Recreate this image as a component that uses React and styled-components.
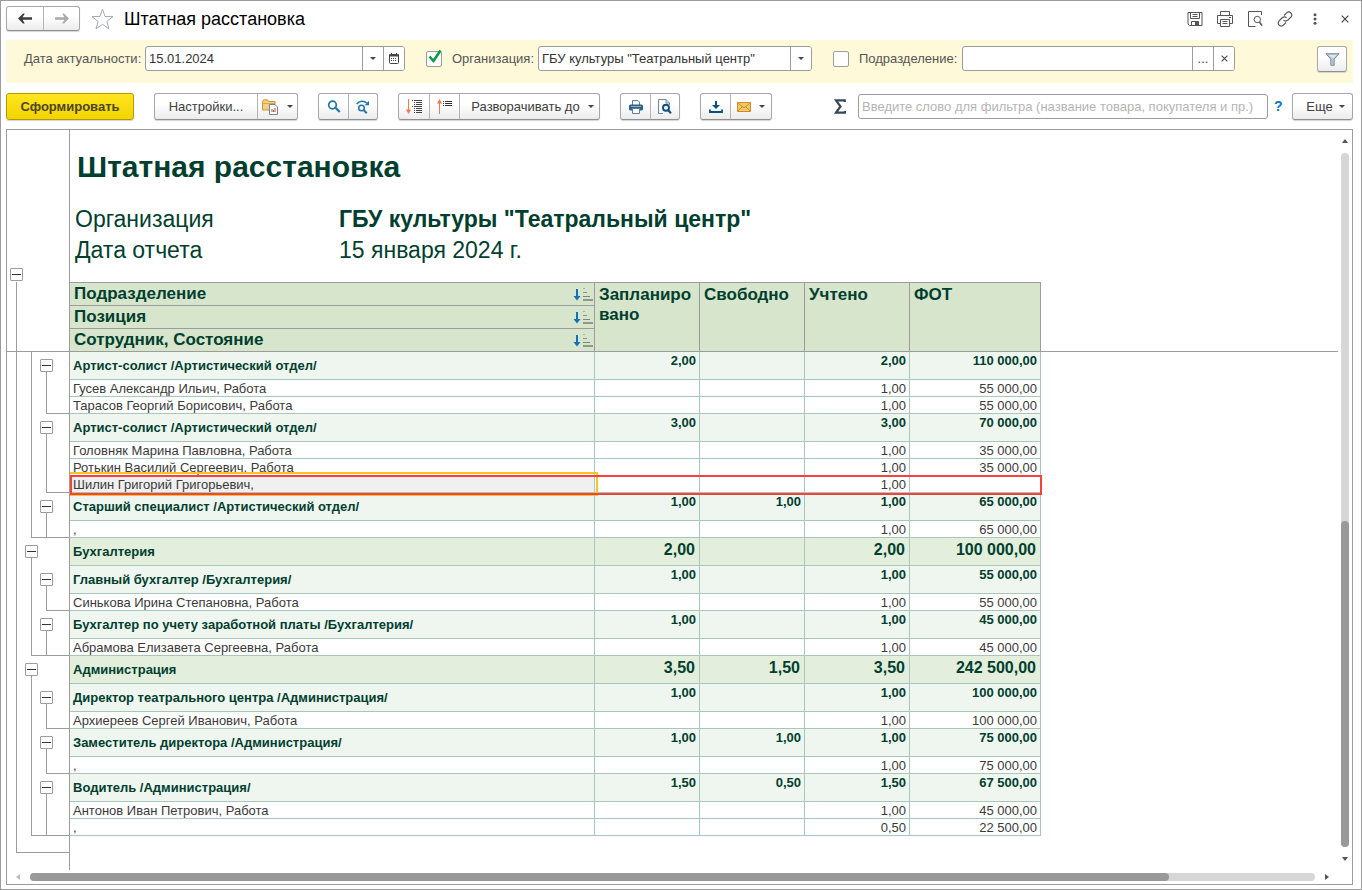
import React from "react";
import styled, { createGlobalStyle, css } from "styled-components";

const LINE = "#9c9c9c";
const GRID = "#a9c6bb";
const DARK = "#003f2f";
const NUM = 105;
const SUM = 131;
const NAME = 525;

const GlobalStyle = createGlobalStyle`
  *, *::before, *::after { box-sizing: border-box; }
  body {
    margin: 0;
    background: #fff;
    color: #404040;
    font: 13px/17px "Liberation Sans", Arial, sans-serif;
  }
  button, input, select { font: inherit; color: inherit; }
`;

const Window = styled.div`
  display: flex;
  flex-direction: column;
  min-height: 100vh;
  padding: 0 8px 4px 5px;
  border: 1px solid ${LINE};
`;

/* ---------- title bar ---------- */

const TitleBar = styled.header`
  display: flex;
  align-items: center;
  height: 39px;
  padding-bottom: 4px;
`;

const ButtonGroup = styled.div`
  display: flex;
  flex: none;
  border: 1px solid #a8a8a8;
  border-bottom-color: #8f8f8f;
  border-radius: 3px;
  background: linear-gradient(#fff 40%, #ececec);
  box-shadow: 0 1px 1px #d4d4d4;
`;

const ToolButton = styled.button`
  display: flex;
  align-items: center;
  justify-content: center;
  gap: ${(p) => p.$gap || 8}px;
  width: ${(p) => p.$width}px;
  height: ${(p) => p.$height || 25}px;
  padding: 0 0 0 ${(p) => (p.$menu ? 6 : 0)}px;
  border: 0;
  background: none;
  & + & { border-left: 1px solid #b5b5b5; }
`;

const StarButton = styled.button`
  display: flex;
  margin: 0 10px 0 11px;
  padding: 0;
  border: 0;
  background: none;
`;

const WindowTitle = styled.h1`
  margin: 0;
  color: #000;
  font-size: 18px;
  font-weight: 400;
  line-height: 24px;
`;

const WindowActions = styled.div`
  display: flex;
  gap: 14px;
  margin-left: auto;
`;

const ActionButton = styled.button`
  display: flex;
  align-items: center;
  justify-content: center;
  width: 16px;
  height: 18px;
  padding: 0;
  border: 0;
  background: none;
`;

/* ---------- filter band ---------- */

const FilterBand = styled.section`
  display: flex;
  align-items: flex-start;
  height: 43px;
  padding: 6px 6px 0 18px;
  background: #fef9d9;
`;

const FilterItem = styled.div`
  display: flex;
  align-items: center;
  flex: 0 1 ${(p) => p.$width}px;
  min-width: 0;
  margin-right: 21px;
`;

const FilterLabel = styled.label`
  flex: none;
  width: ${(p) => p.$width}px;
  color: #555;
  white-space: nowrap;
`;

const FieldBox = styled.div`
  display: flex;
  flex: 1;
  min-width: 0;
  height: 25px;
  border: 1px solid ${LINE};
  border-radius: 3px;
  background: #fff;
  overflow: hidden;
`;

const fieldText = css`
  flex: 1;
  min-width: 0;
  height: 23px;
  padding: 0 3px;
  border: 0;
  outline: 0;
  background: none;
  color: #333;
`;

const FieldInput = styled.input`
  ${fieldText}
  &::placeholder { color: #b5b5b5; opacity: 1; }
`;

const FieldSelect = styled.select`
  ${fieldText}
  appearance: none;
`;

const FieldButton = styled.button`
  display: flex;
  align-items: center;
  justify-content: center;
  flex: none;
  width: 21px;
  height: 23px;
  padding: 0;
  border: 0;
  border-left: 1px solid ${LINE};
  background: #fff;
`;

const TickWrap = styled.span`
  position: relative;
  flex: none;
  width: 16px;
  height: 16px;
  margin-right: 10px;
`;

const TickInput = styled.input`
  display: block;
  appearance: none;
  width: 16px;
  height: 16px;
  margin: 0;
  border: 1px solid ${LINE};
  border-radius: 2px;
  background: #fff;
`;

const TickMark = styled.svg`
  position: absolute;
  left: 2px;
  top: -2px;
  pointer-events: none;
`;

const PushRight = styled.div`
  display: flex;
  align-items: center;
  margin-left: auto;
  min-width: 0;
`;

/* ---------- command bar ---------- */

const CommandBar = styled.div`
  display: flex;
  gap: 20px;
  height: 46px;
  padding-top: 10px;
  align-items: flex-start;
`;

const PrimaryButton = styled.button`
  flex: none;
  width: 128px;
  height: 27px;
  padding: 0;
  border: 1px solid #b39b00;
  border-radius: 3px;
  background: linear-gradient(#ffe51f, #f2d400);
  box-shadow: 0 1px 1px #d4d4d4;
  color: #4a4526;
  font-weight: 700;
`;

const SearchBox = styled(FieldBox)`
  flex: 0 1 auto;
  width: 410px;
  margin: 0 6px 0 12px;
`;

const HelpButton = styled.button`
  flex: none;
  width: 8px;
  margin-right: 10px;
  padding: 0;
  border: 0;
  background: none;
  color: #0076c0;
  font-size: 14px;
  font-weight: 700;
`;

/* ---------- report ---------- */

const ReportFrame = styled.main`
  display: flex;
  flex-direction: column;
  flex: 1;
  border: 1px solid ${LINE};
`;

const ReportBody = styled.div`
  display: flex;
  flex: 1;
`;

const Sheet = styled.div`
  display: flex;
  flex-direction: column;
  flex: 1;
  min-width: 0;
`;

const SheetHead = styled.div`
  display: flex;
  height: 152px;
`;

const Gutter = styled.div`
  display: flex;
  align-items: flex-end;
  flex: none;
  width: 63px;
  padding-left: 3px;
  border-right: 1px solid ${LINE};
`;

const GutterFill = styled(Gutter)`
  flex: 1;
`;

const HeadText = styled.div`
  flex: 1;
  padding: 19px 0 0 5px;
  color: ${DARK};
`;

const ReportTitle = styled.h2`
  margin: 0 0 19px;
  padding-left: 2px;
  font-size: 30px;
  line-height: 36px;
`;

const Facts = styled.dl`
  display: grid;
  grid-template-columns: 264px 1fr;
  margin: 0;
  font-size: 23px;
  line-height: 31px;
`;

const Fact = styled.dd`
  margin: 0;
  font-weight: ${(p) => (p.$strong ? 700 : 400)};
`;

const Table = styled.table`
  width: 100%;
  table-layout: fixed;
  border-collapse: separate;
  border-spacing: 0;
`;

const ink = `linear-gradient(${LINE}, ${LINE})`;
const laneStart = [9, 7, 7];
const lanePaint = {
  none: () => "none",
  start: (x) => `${ink} ${x}px 100% / 1px 50% no-repeat`,
  through: (x) => `${ink} ${x}px 0 / 1px 100% no-repeat`,
  end: (x) =>
    `${ink} ${x}px 0 / 1px 100% no-repeat, ${ink} 100% 100% / calc(100% - ${x}px) 1px no-repeat`,
  bar: () => `${ink} 0 100% / 100% 1px no-repeat`,
  cross: (x) => `${ink} ${x}px 0 / 1px 100% no-repeat, ${ink} 0 100% / 100% 1px no-repeat`,
};

const Lane = styled.td`
  padding: 0 0 0 ${(p) => (p.$index === 0 ? 3 : 1)}px;
  border-right: ${(p) => (p.$index === 2 ? `1px solid ${LINE}` : 0)};
  background: ${(p) => lanePaint[p.$paint](laneStart[p.$index])};
  vertical-align: middle;
`;

const Toggle = styled.button`
  display: flex;
  align-items: center;
  justify-content: center;
  width: 13px;
  height: 13px;
  margin-bottom: 1px;
  padding: 0;
  border: 1px solid ${LINE};
  border-radius: 1px;
  background: #fff;
  &::before {
    content: "";
    width: 9px;
    height: 1px;
    background: #333;
  }
`;

const HeadRow = styled.tr`
  height: ${(p) => (p.$first ? 24 : 23)}px;
`;

const HeadCell = styled.th`
  padding: ${(p) => (p.$tall ? "2px 3px 0 4px" : "0 1px 0 4px")};
  border-right: 1px solid ${LINE};
  border-bottom: 1px solid ${LINE};
  border-top: ${(p) => (p.$top ? `1px solid ${LINE}` : 0)};
  background: #d6e5cb;
  color: ${DARK};
  font-size: 17px;
  line-height: 20px;
  text-align: left;
  vertical-align: ${(p) => (p.$tall ? "top" : "middle")};
  word-break: ${(p) => (p.$tall ? "break-all" : "normal")};
`;

const HeadLabel = styled.div`
  display: flex;
  align-items: center;
  justify-content: space-between;
`;

const Filler = styled.td`
  padding: 0;
  border-bottom: ${(p) => (p.$line ? `1px solid ${LINE}` : 0)};
`;

const rowLook = {
  person: css`
    --fill: #fff;
    --drop: 2px;
    height: 17px;
    color: #3a3a3a;
    font-size: 13px;
    line-height: 14px;
  `,
  post: css`
    --fill: #eff5ef;
    --drop: 0;
    height: 28px;
    color: ${DARK};
    font-size: 13px;
    font-weight: 700;
    line-height: 17px;
  `,
  dept: css`
    --fill: #e3efdc;
    --drop: 0;
    height: 28px;
    color: ${DARK};
    font-size: 13px;
    font-weight: 700;
    line-height: 23px;
  `,
};

const DataRow = styled.tr`
  ${(p) => rowLook[p.$kind]}
`;

const NameCell = styled.td`
  position: ${(p) => (p.$selected ? "relative" : "static")};
  padding: var(--drop) 3px 0;
  border-right: 1px solid ${GRID};
  border-bottom: 1px solid ${GRID};
  background: ${(p) => (p.$selected ? "#f0f0f0" : "var(--fill)")};
  white-space: nowrap;
`;

const NumberCell = styled.td`
  padding: var(--drop) ${(p) => (p.$large ? 4 : 3)}px 0 0;
  border-right: 1px solid ${GRID};
  border-bottom: 1px solid ${GRID};
  background: var(--fill);
  font-size: ${(p) => (p.$large ? 16 : 13)}px;
  text-align: right;
  vertical-align: top;
  white-space: nowrap;
`;

const CellCursor = styled.span`
  position: absolute;
  inset: -4px -4px -4px 0;
  border: 2px solid #f7c325;
  border-left: 0;
  pointer-events: none;
`;

const RowMarker = styled.span`
  position: absolute;
  left: 0;
  top: -1px;
  bottom: -3px;
  width: ${NAME + NUM * 3 + SUM + 1}px;
  border: 2px solid #f9403c;
  pointer-events: none;
  z-index: 1;
`;

const TailRow = styled.tr`
  height: 17px;
`;

/* ---------- scroll bars ---------- */

const VScroll = styled.div`
  display: flex;
  flex-direction: column;
  align-items: center;
  flex: none;
  width: 14px;
  padding: 9px 0;
  gap: 10px;
`;

const HScroll = styled.div`
  display: flex;
  align-items: center;
  height: 14px;
  padding: 0 23px 0 9px;
  gap: 10px;
`;

const Track = styled.div`
  display: flex;
  flex: 1;
  flex-direction: ${(p) => (p.$vertical ? "column" : "row")};
  justify-content: ${(p) => (p.$vertical ? "flex-end" : "flex-start")};
  width: ${(p) => (p.$vertical ? "8px" : "auto")};
  height: ${(p) => (p.$vertical ? "auto" : "8px")};
  border-radius: 4px;
  background: #d6d6d6;
`;

const Thumb = styled.div`
  flex: 0 0 ${(p) => p.$share}%;
  border-radius: 4px;
  background: #999;
`;

const ArrowSvg = styled.svg`
  flex: none;
`;

/* ---------- icons ---------- */

const Caret = () => (
  <ArrowSvg width="6" height="3" viewBox="0 0 6 3" aria-hidden="true">
    <path d="M0 0h6L3 3z" fill="#444" />
  </ArrowSvg>
);

const ScrollArrow = ({ d, w, h, fill = "#555" }) => (
  <ArrowSvg width={w} height={h} viewBox={`0 0 ${w} ${h}`} aria-hidden="true">
    <path d={d} fill={fill} />
  </ArrowSvg>
);

const ArrowIcon = ({ color, flip }) => (
  <svg width="14" height="11" viewBox="0 0 14 11" aria-hidden="true">
    <g transform={flip ? "matrix(-1 0 0 1 14 0)" : undefined}>
      <path d="M0 5.5 5 .5h1.800L4.600 4.300H14v2.400H4.600L6.800 10.500H5z" fill={color} />
    </g>
  </svg>
);

const StarIcon = () => (
  <svg width="23" height="22" viewBox="0 0 23 22" aria-hidden="true">
    <path
      d="M11.5 1.2 14.1 8.5 22 8.6 15.8 13.4 18 20.8 11.5 16.4 5 20.8 7.2 13.4 1 8.6 8.9 8.5z"
      fill="#fff"
      stroke="#a5a9ae"
    />
  </svg>
);

const SaveIcon = () => (
  <svg width="16" height="16" viewBox="0 0 16 16" fill="none" stroke="#555" aria-hidden="true">
    <path d="M1 1.5h14v13H2.5L1 13z" />
    <path d="M3.5 1.5v6h9v-6M5.5 3.5h5M5.5 5.5h5M4.5 14.5v-4h7v4" />
    <path d="M8 11h3v3.5H8z" fill="#555" stroke="none" />
  </svg>
);

const PrinterIcon = () => (
  <svg width="16" height="16" viewBox="0 0 16 16" fill="none" stroke="#555" aria-hidden="true">
    <path d="M3.5 4.5v-4h9v4M3.5 12.5h-3v-8h15v8h-3M3.5 8.5h9v7h-9zM5.5 10.5h5M5.5 12.5h5M12 6.5h2" />
  </svg>
);

const PreviewIcon = () => (
  <svg width="16" height="16" viewBox="0 0 16 16" fill="none" stroke="#555" aria-hidden="true">
    <path d="M14.500 4V.5h-13v15h7" />
    <circle cx="10.300" cy="8.500" r="3.200" />
    <path d="m12.500 11 2.500 3.600" strokeWidth="1.6" />
  </svg>
);

const LinkIcon = () => (
  <svg width="16" height="16" viewBox="0 0 16 16" fill="none" stroke="#555" strokeWidth="1.2" aria-hidden="true">
    <path d="M7 4.5 9.6 1.9a2.9 2.9 0 0 1 4.3 0 2.9 2.9 0 0 1 0 4.2L10.700 9.200a2.900 2.900 0 0 1-4.200 0" />
    <path d="M9 11.500 6.400 14.100a2.900 2.900 0 0 1-4.300 0 2.900 2.900 0 0 1 0-4.200L5.300 6.800a2.900 2.900 0 0 1 4.200 0" />
  </svg>
);

const DotsIcon = () => (
  <svg width="4" height="12" viewBox="0 0 4 12" fill="#555" aria-hidden="true">
    <circle cx="2" cy="1.700" r="1.500" />
    <circle cx="2" cy="6" r="1.500" />
    <circle cx="2" cy="10.300" r="1.500" />
  </svg>
);

const CrossIcon = ({ size = 8 }) => (
  <svg width={size} height={size} viewBox="0 0 8 8" stroke="#444" strokeWidth="1.200" aria-hidden="true">
    <path d="m.7.7 6.600 6.600M7.300.7.700 7.300" />
  </svg>
);

const CalendarIcon = () => (
  <svg width="10" height="11" viewBox="0 0 10 11" fill="none" stroke="#444" aria-hidden="true">
    <rect x=".5" y="1.500" width="9" height="9" rx="1" />
    <path d="M0 2.500h10" strokeWidth="2" />
    <path d="M2.500 0v2M7.500 0v2" />
    <path d="M2 5.500h6M2 7.500h6" strokeDasharray="1 1" />
  </svg>
);

const FunnelIcon = () => (
  <svg width="15" height="13" viewBox="0 0 15 13" aria-hidden="true">
    <path d="M1 .7h13L9.200 6.200v6.100H5.800V6.200z" fill="#b9c6d2" stroke="#7c8f9f" />
    <path d="M3.500 2h8L8 5.500z" fill="#dfe7ee" />
  </svg>
);

const FolderIcon = () => (
  <svg width="17" height="16" viewBox="0 0 17 16" aria-hidden="true">
    <path d="M.5 2.500 1.500.8h4l1 1.700h6.500V11H.5z" fill="#f4cf7c" stroke="#c9953a" />
    <path d="M.5 4.500H13" stroke="#d8a74c" />
    <path d="M7.500 5.500h5.500l2.500 2.500v7.500h-8z" fill="#fff" stroke="#6f8597" />
    <path d="M10 13v-3" stroke="#e03a2f" />
    <path d="M11.500 13v-2" stroke="#2f9e4f" />
    <path d="M13 13V9" stroke="#e03a2f" />
  </svg>
);

const FindIcon = () => (
  <svg width="14" height="13" viewBox="0 0 14 13" fill="none" stroke="#2474ac" aria-hidden="true">
    <circle cx="5.500" cy="5" r="3.800" strokeWidth="1.700" />
    <path d="m8.500 7.800 4.200 4.200" strokeWidth="2.200" />
  </svg>
);

const FindNextIcon = () => (
  <svg width="14" height="14" viewBox="0 0 14 14" fill="none" stroke="#2474ac" aria-hidden="true">
    <path d="M.8 4C3 .8 8 .3 10.800 3" strokeWidth="1.600" />
    <path d="M13 .8v4.400H8.600z" fill="#2474ac" stroke="none" />
    <circle cx="5.500" cy="8" r="2.800" strokeWidth="1.500" />
    <path d="m7.600 10 3.200 3.200" strokeWidth="2" />
  </svg>
);

const ExpandIcon = () => (
  <svg width="16" height="15" viewBox="0 0 16 15" fill="none" aria-hidden="true">
    <path d="M2.500 0v13" stroke="#f4794a" />
    <path d="M0 10.500h5L2.500 15z" fill="#f4794a" />
    <path d="M6 1.500h1M8 1.500h8M8 3.500h1M10 3.500h6M8 5.500h1M10 5.500h6M6 7.500h1M8 7.500h8M8 9.500h1M10 9.500h6M8 11.500h1M10 11.500h6M8 13.500h1M10 13.500h6" stroke="#444" />
  </svg>
);

const CollapseIcon = () => (
  <svg width="16" height="15" viewBox="0 0 16 15" fill="none" aria-hidden="true">
    <path d="M2.500 2v13" stroke="#f4794a" />
    <path d="M0 4.500h5L2.500 0z" fill="#f4794a" />
    <path d="M6 2.500h1M8 2.500h7M6 4.500h1M8 4.500h7M6 6.500h1M8 6.500h7" stroke="#333" />
  </svg>
);

const PrintIcon = () => (
  <svg width="14" height="14" viewBox="0 0 14 14" aria-hidden="true">
    <path d="M3.500 5V.5H9l1.500 1.500V5" fill="#fff" stroke="#5f7f9c" />
    <rect y="4.500" width="14" height="6" rx="1.500" fill="#2f6087" />
    <path d="M2 6.500h10" stroke="#8fb1cb" />
    <path d="M3.500 8.500h7v5h-7z" fill="#fff" stroke="#5f7f9c" />
  </svg>
);

const PagePreviewIcon = () => (
  <svg width="14" height="15" viewBox="0 0 14 15" fill="none" aria-hidden="true">
    <path d="M5 14.500H.5V.5H8l3.500 3.500V6M8 .5V4h3.500" stroke="#71899d" />
    <circle cx="8" cy="8.800" r="3" stroke="#0f4f80" strokeWidth="1.900" />
    <path d="m10 11 3 3.200" stroke="#0f4f80" strokeWidth="2.200" />
  </svg>
);

const DownloadIcon = () => (
  <svg width="14" height="12" viewBox="0 0 14 12" fill="none" stroke="#0b4f82" aria-hidden="true">
    <path d="M7 0v5" strokeWidth="2" />
    <path d="M3 4h8L7 8z" fill="#0b4f82" stroke="none" />
    <path d="M1 8.500V11h12V8.500" strokeWidth="1.800" />
  </svg>
);

const MailIcon = () => (
  <svg width="14" height="10" viewBox="0 0 14 10" aria-hidden="true">
    <path d="M.5.5h13v9H.5z" fill="#f8c766" stroke="#cb8d2b" />
    <path d="m1 1 6 5 6-5M1 9l4-4M13 9 9 5" fill="none" stroke="#c98a2a" />
  </svg>
);

const SigmaIcon = () => (
  <ArrowSvg width="12" height="15" viewBox="0 0 12 15" aria-hidden="true">
    <path d="M10.800 3V1.400H2L6.500 7.500 2 13.600h9V12" fill="none" stroke="#35495a" strokeWidth="2.200" />
  </ArrowSvg>
);

const SortIcon = () => (
  <svg width="20" height="13" viewBox="0 0 20 13" fill="none" aria-hidden="true">
    <path d="M4 1v8" stroke="#1271bd" strokeWidth="2" />
    <path d="M.5 8h7L4 12.500z" fill="#1271bd" />
    <path d="M10 .5h2" stroke="#a9b3a4" />
    <path d="M10 4.500h4" stroke="#8d9689" />
    <path d="M10 8.500h7" stroke="#7d867a" />
    <path d="M10 12h10" stroke="#4a4f48" />
  </svg>
);

/* ---------- data ---------- */

const post = (name, values, people) => ({ name, values, people });

const report = [
  {
    posts: [
      post("Артист-солист /Артистический отдел/", ["2,00", "", "2,00", "110 000,00"], [
        ["Гусев Александр Ильич, Работа", "1,00", "55 000,00"],
        ["Тарасов Георгий Борисович, Работа", "1,00", "55 000,00"],
      ]),
      post("Артист-солист /Артистический отдел/", ["3,00", "", "3,00", "70 000,00"], [
        ["Головняк Марина Павловна, Работа", "1,00", "35 000,00"],
        ["Ротькин Василий Сергеевич, Работа", "1,00", "35 000,00"],
        ["Шилин Григорий Григорьевич,", "1,00", "", true],
      ]),
      post("Старший специалист /Артистический отдел/", ["1,00", "1,00", "1,00", "65 000,00"], [
        [",", "1,00", "65 000,00"],
      ]),
    ],
  },
  {
    name: "Бухгалтерия",
    values: ["2,00", "", "2,00", "100 000,00"],
    posts: [
      post("Главный бухгалтер /Бухгалтерия/", ["1,00", "", "1,00", "55 000,00"], [
        ["Синькова Ирина Степановна, Работа", "1,00", "55 000,00"],
      ]),
      post("Бухгалтер по учету заработной платы /Бухгалтерия/", ["1,00", "", "1,00", "45 000,00"], [
        ["Абрамова Елизавета Сергеевна, Работа", "1,00", "45 000,00"],
      ]),
    ],
  },
  {
    name: "Администрация",
    values: ["3,50", "1,50", "3,50", "242 500,00"],
    posts: [
      post("Директор театрального центра /Администрация/", ["1,00", "", "1,00", "100 000,00"], [
        ["Архиереев Сергей Иванович, Работа", "1,00", "100 000,00"],
      ]),
      post("Заместитель директора /Администрация/", ["1,00", "1,00", "1,00", "75 000,00"], [
        [",", "1,00", "75 000,00"],
      ]),
      post("Водитель /Администрация/", ["1,50", "0,50", "1,50", "67 500,00"], [
        ["Антонов Иван Петрович, Работа", "1,00", "45 000,00"],
        [",", "0,50", "22 500,00"],
      ]),
    ],
  },
];

const personLanes = (lastPerson, lastPost) => {
  if (lastPost) return ["through", "end", "cross"];
  return ["through", "through", lastPerson ? "end" : "through"];
};

const rows = report.flatMap((dept) => [
  ...(dept.name
    ? [{ kind: "dept", name: dept.name, values: dept.values, lanes: ["through", "start", "none"] }]
    : []),
  ...dept.posts.flatMap((item, p) => [
    { kind: "post", name: item.name, values: item.values, lanes: ["through", "through", "start"] },
    ...item.people.map(([name, count, sum, selected], i) => {
      const lastPerson = i === item.people.length - 1;
      return {
        kind: "person",
        name,
        selected,
        values: ["", "", count, sum],
        lanes: personLanes(lastPerson, lastPerson && p === dept.posts.length - 1),
      };
    }),
  ]),
]);

const Lanes = ({ paints }) =>
  paints.map((paint, i) => (
    <Lane key={i} $index={i} $paint={paint}>
      {paint === "start" && <Toggle type="button" aria-label="Свернуть группу" />}
    </Lane>
  ));

const keyHeads = ["Подразделение", "Позиция", "Сотрудник, Состояние"];
const numberHeads = ["Запланировано", "Свободно", "Учтено", "ФОТ"];

const ReportTable = () => (
  <Table>
    <colgroup>
      {[17, 15, 31, NAME, NUM, NUM, NUM, SUM].map((w, i) => (
        <col key={i} width={w} />
      ))}
      <col />
    </colgroup>
    <thead>
      {keyHeads.map((head, i) => (
        <HeadRow key={head} $first={i === 0}>
          <Lanes paints={i === 2 ? ["cross", "bar", "bar"] : ["through", "none", "none"]} />
          <HeadCell $top={i === 0}>
            <HeadLabel>
              {head}
              <SortIcon />
            </HeadLabel>
          </HeadCell>
          {i === 0 &&
            numberHeads.map((text) => (
              <HeadCell key={text} $tall $top rowSpan={3}>
                {text}
              </HeadCell>
            ))}
          <Filler $line={i === 2} />
        </HeadRow>
      ))}
    </thead>
    <tbody>
      {rows.map((row, i) => (
        <DataRow key={i} $kind={row.kind}>
          <Lanes paints={row.lanes} />
          <NameCell $selected={row.selected}>
            {row.name}
            {row.selected && <CellCursor />}
            {row.selected && <RowMarker />}
          </NameCell>
          {row.values.map((value, c) => (
            <NumberCell key={c} $large={row.kind === "dept"}>
              {value}
            </NumberCell>
          ))}
          <Filler />
        </DataRow>
      ))}
      <TailRow>
        <Lanes paints={["end", "bar", "bar"]} />
        <Filler colSpan={6} />
      </TailRow>
    </tbody>
  </Table>
);

const windowActions = [
  ["Сохранить", SaveIcon],
  ["Печать", PrinterIcon],
  ["Предварительный просмотр", PreviewIcon],
  ["Ссылка", LinkIcon],
  ["Меню", DotsIcon],
  ["Закрыть", CrossIcon],
];

export default function App() {
  return (
    <Window>
      <GlobalStyle />
      <TitleBar>
        <ButtonGroup>
          <ToolButton type="button" $width={36} $height={23} aria-label="Назад">
            <ArrowIcon color="#3d3d3d" />
          </ToolButton>
          <ToolButton type="button" $width={36} $height={23} aria-label="Вперед">
            <ArrowIcon color="#a9a9a9" flip />
          </ToolButton>
        </ButtonGroup>
        <StarButton type="button" aria-label="В избранное">
          <StarIcon />
        </StarButton>
        <WindowTitle>Штатная расстановка</WindowTitle>
        <WindowActions>
          {windowActions.map(([label, Icon]) => (
            <ActionButton key={label} type="button" aria-label={label}>
              <Icon />
            </ActionButton>
          ))}
        </WindowActions>
      </TitleBar>

      <FilterBand>
        <FilterItem $width={381}>
          <FilterLabel $width={121} htmlFor="date">Дата актуальности:</FilterLabel>
          <FieldBox>
            <FieldInput id="date" defaultValue="15.01.2024" />
            <FieldButton type="button" aria-label="Выбрать период"><Caret /></FieldButton>
            <FieldButton type="button" aria-label="Календарь"><CalendarIcon /></FieldButton>
          </FieldBox>
        </FilterItem>
        <FilterItem $width={386}>
          <TickWrap>
            <TickInput type="checkbox" defaultChecked aria-label="Отбор по организации" />
            <TickMark width="14" height="15" viewBox="0 0 14 15" aria-hidden="true">
              <path d="m1.500 7.500 4 4.500L12.500 1.500" fill="none" stroke="#0a9b48" strokeWidth="2.600" />
            </TickMark>
          </TickWrap>
          <FilterLabel $width={86} htmlFor="org">Организация:</FilterLabel>
          <FieldBox>
            <FieldSelect id="org">
              <option>ГБУ культуры "Театральный центр"</option>
            </FieldSelect>
            <FieldButton as="span"><Caret /></FieldButton>
          </FieldBox>
        </FilterItem>
        <FilterItem $width={402}>
          <TickWrap>
            <TickInput type="checkbox" aria-label="Отбор по подразделению" />
          </TickWrap>
          <FilterLabel $width={103} htmlFor="dept">Подразделение:</FilterLabel>
          <FieldBox>
            <FieldInput id="dept" />
            <FieldButton type="button" aria-label="Выбрать">...</FieldButton>
            <FieldButton type="button" aria-label="Очистить"><CrossIcon size={7} /></FieldButton>
          </FieldBox>
        </FilterItem>
        <PushRight>
          <ButtonGroup>
            <ToolButton type="button" $width={28} $height={24} aria-label="Отборы">
              <FunnelIcon />
            </ToolButton>
          </ButtonGroup>
        </PushRight>
      </FilterBand>

      <CommandBar>
        <PrimaryButton type="button">Сформировать</PrimaryButton>
        <ButtonGroup>
          <ToolButton type="button" $width={102}>Настройки...</ToolButton>
          <ToolButton type="button" $width={40} aria-label="Варианты отчета">
            <FolderIcon />
            <Caret />
          </ToolButton>
        </ButtonGroup>
        <ButtonGroup>
          <ToolButton type="button" $width={29} aria-label="Найти"><FindIcon /></ToolButton>
          <ToolButton type="button" $width={29} aria-label="Найти далее"><FindNextIcon /></ToolButton>
        </ButtonGroup>
        <ButtonGroup>
          <ToolButton type="button" $width={30} aria-label="Развернуть"><ExpandIcon /></ToolButton>
          <ToolButton type="button" $width={30} aria-label="Свернуть"><CollapseIcon /></ToolButton>
          <ToolButton type="button" $width={140} $menu>
            Разворачивать до
            <Caret />
          </ToolButton>
        </ButtonGroup>
        <ButtonGroup>
          <ToolButton type="button" $width={29} aria-label="Печать"><PrintIcon /></ToolButton>
          <ToolButton type="button" $width={29} aria-label="Просмотр"><PagePreviewIcon /></ToolButton>
        </ButtonGroup>
        <ButtonGroup>
          <ToolButton type="button" $width={29} aria-label="Сохранить"><DownloadIcon /></ToolButton>
          <ToolButton type="button" $width={41} aria-label="Отправить">
            <MailIcon />
            <Caret />
          </ToolButton>
        </ButtonGroup>
        <PushRight>
          <SigmaIcon />
          <SearchBox>
            <FieldInput
              aria-label="Фильтр"
              placeholder="Введите слово для фильтра (название товара, покупателя и пр.)"
            />
          </SearchBox>
          <HelpButton type="button">?</HelpButton>
          <ButtonGroup>
            <ToolButton type="button" $width={59} $gap={6} $menu>
              Еще
              <Caret />
            </ToolButton>
          </ButtonGroup>
        </PushRight>
      </CommandBar>

      <ReportFrame>
        <ReportBody>
          <Sheet>
            <SheetHead>
              <Gutter>
                <Toggle type="button" aria-label="Свернуть отчет" />
              </Gutter>
              <HeadText>
                <ReportTitle>Штатная расстановка</ReportTitle>
                <Facts>
                  <dt>Организация</dt>
                  <Fact $strong>ГБУ культуры "Театральный центр"</Fact>
                  <dt>Дата отчета</dt>
                  <Fact>15 января 2024 г.</Fact>
                </Facts>
              </HeadText>
            </SheetHead>
            <ReportTable />
            <GutterFill />
          </Sheet>
          <VScroll>
            <ScrollArrow w={6} h={4} d="M0 4h6L3 0z" />
            <Track $vertical>
              <Thumb $share={47} />
            </Track>
            <ScrollArrow w={6} h={4} d="M0 0h6L3 4z" />
          </VScroll>
        </ReportBody>
        <HScroll>
          <ScrollArrow w={4} h={6} d="M4 0v6L0 3z" fill="#bbb" />
          <Track>
            <Thumb $share={88.6} />
          </Track>
          <ScrollArrow w={4} h={6} d="M0 0v6L4 3z" />
        </HScroll>
      </ReportFrame>
    </Window>
  );
}
